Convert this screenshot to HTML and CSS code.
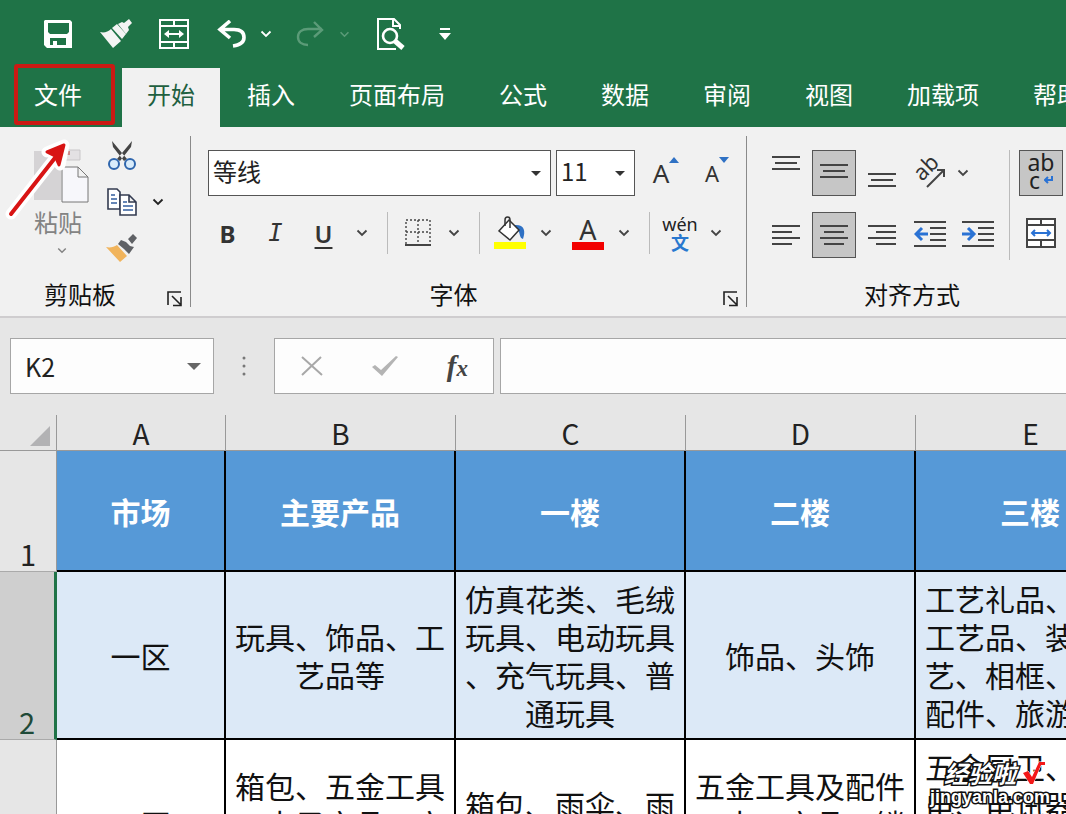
FILE: index.html
```html
<!DOCTYPE html>
<html lang="zh-CN">
<head>
<meta charset="utf-8">
<title>K2</title>
<link rel="stylesheet" href="styles.css">
</head>
<body>
<svg class="defs" aria-hidden="true">
  <symbol id="chev" viewBox="0 0 12 8"><path d="M1.5 1.5 6 6l4.500-4.500" fill="none" stroke="currentColor" stroke-width="1.800"/></symbol>
  <symbol id="tri" viewBox="0 0 12 6"><path d="M0 0h12L6 6z" fill="currentColor"/></symbol>
  <symbol id="launch" viewBox="0 0 16 16"><path d="M1 14V1h13M5 5l9 9M14 6v8.500H6" fill="none" stroke="#222" stroke-width="1.600"/></symbol>
</svg>
<div class="app">
  <header class="titlebar">
    <button class="q" aria-label="保存"><svg width="30" height="30" viewBox="0 0 30 30"><path fill="#fff" fill-rule="evenodd" d="M2 1h25l2 2v26H4l-3-3V2zM5 4v9l2 2h17l2-2V4zM7 19v7h3v-4h4v4h9v-7z"/></svg></button>
    <button class="q" aria-label="格式刷"><svg width="34" height="30" viewBox="0 0 34 30"><g fill="#f4f4f4"><path d="M1 13c4 1 8 0 11-3l10 12-8 7z"/><path d="m13 9 5-4 9 10-4 5z"/><path d="m19 5 4-2 2 1 5-4 3 4-4 4 1 3-3 4z"/></g></svg></button>
    <button class="q" aria-label="合并"><svg width="32" height="32" viewBox="0 0 32 32" fill="none" stroke="#fff" stroke-width="2"><path d="M2 2h28v28H2zM2 8h28M2 24h28M16 2v6M16 24v6M8 16h16"/><path fill="#fff" stroke="none" d="M6 16l5-4v8zM26 16l-5-4v8z"/></svg></button>
    <button class="q undo" aria-label="撤消"><svg width="30" height="28" viewBox="0 0 30 28" fill="none" stroke="#fff" stroke-width="3.600"><path d="M13 1 3 9.500 13 18M3 9.500h14c7 0 10 3 10 8S23 25 16 26"/></svg></button>
    <button class="q drop" aria-label="撤消选项"><svg width="12" height="8"><use href="#chev"/></svg></button>
    <button class="q redo" aria-label="恢复"><svg width="30" height="28" viewBox="0 0 30 28" fill="none" stroke="currentColor" stroke-width="2.400"><path d="m19 2 8 8-8 7M27 9H13c-6 0-10 3-10 8s4 8 10 8"/></svg></button>
    <button class="q drop faded" aria-label="恢复选项"><svg width="11" height="7"><use href="#chev"/></svg></button>
    <button class="q preview" aria-label="打印预览"><svg width="30" height="34" viewBox="0 0 30 34" fill="none" stroke="#fff"><path stroke-width="2" d="M20 32H2V2h16l6 6v4M17 2v7h7"/><circle cx="14" cy="19" r="7" stroke-width="2.600"/><path stroke-width="5" d="m19 24 8 7"/></svg></button>
    <button class="q more" aria-label="自定义"><svg width="12" height="14" viewBox="0 0 12 14"><path fill="#fff" d="M1 1h10v2H1zM0 6h12l-6 7z"/></svg></button>
  </header>
  <nav class="tabs">
    <button class="tab file">文件<span class="mark"></span></button>
    <button class="tab active">开始</button>
    <button class="tab">插入</button>
    <button class="tab">页面布局</button>
    <button class="tab">公式</button>
    <button class="tab">数据</button>
    <button class="tab">审阅</button>
    <button class="tab">视图</button>
    <button class="tab">加载项</button>
    <button class="tab">帮助</button>
  </nav>
  <section class="ribbon">
    <div class="group clip">
      <div class="clip-body">
        <button class="paste">
          <svg width="56" height="56" viewBox="0 0 56 56"><path fill="#d5d3d5" d="M0 3h46v9H27v40H0z"/><path fill="#e3e1e3" stroke="#c9c7c9" d="M17 2h29v10H17z"/><path fill="#c88" d="M28 3h8v4h-8z"/><path fill="#f7f7fb" stroke="#777" d="M28 19h16l10 10v25H28zM44 19v10h10"/></svg>
          <span>粘贴</span>
          <svg width="10" height="7"><use href="#chev"/></svg>
        </button>
        <div class="clip-tools">
          <button aria-label="剪切"><svg width="30" height="30" viewBox="0 0 30 30"><path fill="#444" d="m5 0 1 6 11 14 3-2zM25 0l-1 6-11 14-3-2z"/><g fill="#d9ecfb" stroke="#2f66ad" stroke-width="2"><circle cx="7" cy="23" r="5"/><circle cx="23" cy="23" r="5"/></g></svg></button>
          <div class="pair"><button aria-label="复制"><svg width="30" height="28" viewBox="0 0 30 28"><g fill="#fff" stroke="#333b50" stroke-width="1.600"><path d="M1 1h9l3 3v17H1z"/><path d="M13 7h9l7 7v13H13zM22 7v7h7"/></g><path stroke="#345f9f" stroke-width="1.500" d="M4 7h4M4 11h6M4 15h6M16 14h4M16 18h10M16 22h10"/></svg></button>
          <button aria-label="复制选项"><svg width="12" height="8"><use href="#chev"/></svg></button></div>
          <button aria-label="格式刷"><svg width="32" height="28" viewBox="0 0 32 28"><path fill="#f1b45c" d="M0 13c4 1 8 0 11-2l10 11-7 6z"/><path fill="#5f6165" d="m12 10 3-4 5 2 4 4 4 1-5 7-5-5zM22 5l5-5 4 4-5 6z"/></svg></button>
        </div>
      </div>
      <footer><span>剪贴板</span><button aria-label="剪贴板设置"><svg width="16" height="16"><use href="#launch"/></svg></button></footer>
      <svg class="arrow" width="76" height="84" viewBox="0 0 76 84"><g fill="none" stroke-linecap="round" stroke-linejoin="round"><path stroke="#fff" stroke-width="11" d="M11 78 58 18M64 9 47 16M64 9l-4 20"/><path stroke="#d81414" stroke-width="4" d="M11 78 58 18"/><path fill="#d81414" stroke="#d81414" stroke-width="3" d="m64 9-17 7 8 4 4 9z"/></g></svg>
    </div>
    <div class="group font">
      <div class="upper">
      <div class="row top">
        <label class="pick name"><select aria-label="字体"><option>等线</option></select><svg width="10" height="5"><use href="#tri"/></svg></label>
        <label class="pick size"><select aria-label="字号"><option>11</option></select><svg width="10" height="5"><use href="#tri"/></svg></label>
        <button class="grow" aria-label="增大字号">A<svg width="10" height="6" viewBox="0 0 10 6"><path fill="#2f71c4" d="M0 6h10L5 0z"/></svg></button>
        <button class="grow small" aria-label="减小字号">A<svg width="10" height="6" viewBox="0 0 10 6"><path fill="#2f71c4" d="M0 0h10L5 6z"/></svg></button>
      </div>
      <div class="row fmt">
        <button class="letter b">B</button><button class="letter i">I</button><button class="letter u">U</button>
        <button class="dd" aria-label="下划线选项"><svg width="12" height="8"><use href="#chev"/></svg></button>
        <i class="sep"></i>
        <button class="ico" aria-label="边框"><svg width="26" height="28" viewBox="0 0 26 28" fill="none" stroke="#444"><path stroke-dasharray="2 2" stroke-width="1.400" d="M1 25V1h24v24M1 13h24M13 1v24"/><path stroke-width="2" d="M0 26h26"/></svg></button>
        <button class="dd" aria-label="边框选项"><svg width="12" height="8"><use href="#chev"/></svg></button>
        <i class="sep"></i>
        <button class="ico" aria-label="填充颜色"><svg width="34" height="34" viewBox="0 0 34 34"><path fill="#2f71c4" d="M21 9c10-1 12 5 9 14-3-1-3-4-4-7z"/><path fill="#fff" stroke="#333" stroke-width="1.500" d="m16 4 10 10-9 10L6 15z"/><path fill="none" stroke="#333" stroke-width="1.500" d="M12 10V4c0-4 5-4 5 0v8"/><path fill="#ff0" d="M1 26h32v7H1z"/></svg></button>
        <button class="dd wide" aria-label="填充选项"><svg width="12" height="8"><use href="#chev"/></svg></button>
        <button class="ico ink" aria-label="字体颜色"><span>A</span></button>
        <button class="dd" aria-label="字体颜色选项"><svg width="12" height="8"><use href="#chev"/></svg></button>
        <i class="sep"></i>
        <button class="ico pinyin"><span>wén</span><b>文</b></button>
        <button class="dd" aria-label="拼音选项"><svg width="12" height="8"><use href="#chev"/></svg></button>
      </div>
      </div>
      <footer><span>字体</span><button aria-label="字体设置"><svg width="16" height="16"><use href="#launch"/></svg></button></footer>
    </div>
    <div class="group align">
      <div class="align-body">
        <div class="rows">
          <div class="row">
            <button class="sq" aria-label="顶端对齐"><svg width="28" height="34" viewBox="0 0 28 34"><path d="M0 1h28M3 7h22M0 13h28"/></svg></button>
            <button class="sq on" aria-label="垂直居中"><svg width="28" height="30" viewBox="0 0 28 30"><path d="M0 7h28M3 13h22M0 19h28"/></svg></button>
            <button class="sq" aria-label="底端对齐"><svg width="28" height="30" viewBox="0 0 28 30"><path d="M0 16h28M3 22h22M0 28h28"/></svg></button>
            <button class="sq angle" aria-label="方向"><svg width="34" height="34" viewBox="0 0 34 34"><text transform="translate(9 26) rotate(-45)">ab</text><path d="m14 31 17-17M24 14h7v7"/></svg></button>
            <button class="dd slim" aria-label="方向选项"><svg width="12" height="8"><use href="#chev"/></svg></button>
          </div>
          <div class="row">
            <button class="sq" aria-label="左对齐"><svg width="28" height="20" viewBox="0 0 28 20"><path d="M0 1h28M0 7h20M0 13h28M0 19h20"/></svg></button>
            <button class="sq on" aria-label="居中"><svg width="28" height="20" viewBox="0 0 28 20"><path d="M0 1h28M4 7h20M0 13h28M4 19h20"/></svg></button>
            <button class="sq" aria-label="右对齐"><svg width="28" height="20" viewBox="0 0 28 20"><path d="M0 1h28M8 7h20M0 13h28M8 19h20"/></svg></button>
            <button class="sq" aria-label="减少缩进"><svg width="32" height="28" viewBox="0 0 32 28"><path d="M0 1h32M16 7h16M16 13h16M16 19h16M0 25h32"/><path class="blue" d="M14 13H2M8 7l-6 6 6 6"/></svg></button>
            <button class="sq" aria-label="增加缩进"><svg width="32" height="28" viewBox="0 0 32 28"><path d="M0 1h32M16 7h16M16 13h16M16 19h16M0 25h32"/><path class="blue" d="M0 13h12M6 7l6 6-6 6"/></svg></button>
          </div>
        </div>
        <i class="sep tall"></i>
        <div class="rows">
          <button class="sq on wrap"><span>ab</span><span>c<svg width="9" height="8" viewBox="0 0 9 8"><path class="blue" d="M8 0v4H1M4 1 1 4l3 3"/></svg></span></button>
          <button class="sq" aria-label="合并后居中"><svg width="30" height="34" viewBox="0 0 30 34"><path class="pane" d="M1 1h28v28H1zM1 7h28M1 22h28M15 1v6M15 22v7"/><path class="blue" d="M6 15h18M9 12l-3 3 3 3M21 12l3 3-3 3"/></svg></button>
        </div>
      </div>
      <footer><span>对齐方式</span></footer>
    </div>
  </section>
  <section class="formula">
    <div class="box namebox"><input aria-label="名称框" value="K2"><button aria-label="名称列表"><svg width="14" height="7"><use href="#tri"/></svg></button></div>
    <svg class="dots" width="4" height="20" viewBox="0 0 4 20" fill="#777"><circle cx="2" cy="2" r="1.500"/><circle cx="2" cy="10" r="1.500"/><circle cx="2" cy="18" r="1.500"/></svg>
    <div class="box acts">
      <button aria-label="取消"><svg width="22" height="20" viewBox="0 0 22 20"><path fill="none" stroke="#a8a8a8" stroke-width="2" d="m1 1 20 18M20 1 1 19"/></svg></button>
      <button aria-label="输入"><svg width="26" height="20" viewBox="0 0 26 20"><path fill="#b4b4b4" d="m0 11 3-2 6 5L24 0l2 1L10 20z"/></svg></button>
      <button class="fx">f<sub>x</sub></button>
    </div>
    <input class="box entry" aria-label="编辑栏">
  </section>
  <main class="sheet">
    <table>
      <colgroup><col class="cn"><col class="ca"><col class="cb"><col class="cb"><col class="cb"><col class="cb"></colgroup>
      <thead><tr><th class="corner"><svg width="20" height="20" viewBox="0 0 20 20"><path fill="#b2b2b4" d="M20 0v20H0z"/></svg></th><th>A</th><th>B</th><th>C</th><th>D</th><th>E</th></tr></thead>
      <tbody>
        <tr class="r1"><th>1</th><td>市场</td><td>主要产品</td><td>一楼</td><td>二楼</td><td>三楼</td></tr>
        <tr class="r2"><th>2</th><td>一区</td><td>玩具、饰品、工<br>艺品等</td><td>仿真花类、毛绒<br>玩具、电动玩具<br>、充气玩具、普<br>通玩具</td><td>饰品、头饰</td><td>工艺礼品、旅游<br>工艺品、装饰工<br>艺、相框、相框<br>配件、旅游用品</td></tr>
        <tr class="r3"><th>3</th><td>二区</td><td>箱包、五金工具<br>、电子产品、家<br>电等</td><td>箱包、雨伞、雨<br>披</td><td>五金工具及配件<br>、电工产品、锁<br>具、车类</td><td>五金厨卫、小家<br>电、电讯器材、<br>电子仪器、钟表<br>等</td></tr>
      </tbody>
    </table>
  </main>
  <div class="stamp"><p class="cn-name">经验啦<svg width="24" height="24" viewBox="0 0 24 24"><path fill="#f31818" stroke="#fff" d="m1 12 5-2 4 6 7-15h6v3h-4L11 23H8z"/></svg></p><p>jingyanla.com</p></div>
</div>
</body>
</html>
```

FILE: styles.css
```css
* { box-sizing: border-box; }
body { margin: 0; font-family: "Noto Sans CJK SC", sans-serif; color: #222; }
button { border: 0; padding: 0; margin: 0; background: none; font: inherit; color: inherit; display: flex; align-items: center; justify-content: center; flex: none; }
input, select { font: inherit; color: inherit; border: 0; outline: 0; background: none; }
svg { display: block; flex: none; }
.defs { position: absolute; width: 0; height: 0; }
.app { position: relative; height: 100vh; overflow: hidden; display: flex; flex-direction: column; background: #e6e6e6; }

.titlebar { flex: none; height: 68px; background: #1f7347; display: flex; align-items: center; padding-left: 43px; color: #fff; }
.q { width: 30px; height: 34px; margin-right: 28px; }
.q.undo { margin: 0 13px 0 0; }
.q.drop { width: 12px; margin-right: 23px; }
.q.redo { margin-right: 13px; color: #5b9b78; }
.q.faded { color: #5b9b78; margin-right: 26px; }
.q.preview { margin-right: 33px; }
.q.more { width: 12px; margin: 0; }

.tabs { flex: none; display: flex; height: 59px; background: #1f7347; padding-left: 7px; color: #fff; }
.tab { padding: 0 27px 8px; font-size: 24px; white-space: nowrap; }
.tab.active { background: #f1f1f1; color: #1f6040; padding: 0 25px 8px; margin-left: 13px; }
.file { position: relative; }
.mark { position: absolute; left: 7px; top: -4px; right: -6px; bottom: 2px; border: 4px solid #cb1a14; border-radius: 3px; }

.ribbon { flex: none; display: flex; height: 191px; background: #f1f1f1; border-bottom: 2px solid #cfcdcf; padding-top: 9px; }
.group { position: relative; flex: none; height: 171px; display: flex; flex-direction: column; justify-content: space-between; border-right: 1px solid #8a8a8a; }
.group footer { display: flex; align-items: center; height: 26px; font-size: 24px; color: #111; }
.group footer span { flex: 1; text-align: center; line-height: 24px; }
.group footer button { width: 30px; height: 16px; align-self: flex-end; }
.clip { width: 191px; }
.clip footer { padding-right: 0; }
.clip-body { display: flex; padding-left: 34px; }
.paste { flex-direction: column; padding-top: 12px; justify-content: flex-start; color: #838383; font-size: 24px; width: 56px; }
.paste span { line-height: 30px; margin: 3px 8px 10px 0; }
.clip-tools { display: flex; flex-direction: column; gap: 6px; padding-left: 16px; }
.clip-tools button { height: 40px; width: 32px; }
.pair { display: flex; gap: 14px; }
.clip-tools .pair button + button { width: 12px; }
.arrow { position: absolute; left: 0; top: 0; }

.row { display: flex; align-items: center; }
.font { width: 556px; }
.font .top { padding: 14px 0 0 17px; gap: 5px; }
.pick { display: flex; align-items: center; height: 46px; border: 1px solid #555; background: #fff; padding-right: 9px; color: #333; }
.pick select { flex: 1; min-width: 0; appearance: none; font-size: 24px; line-height: 40px; height: 44px; padding: 0 4px 4px; color: #222; }
.name { width: 343px; }
.size { width: 79px; }
.grow { font: 26px/32px "Noto Sans", sans-serif; align-items: flex-end; width: 46px; height: 32px; padding-left: 6px; color: #333; }
.grow svg { align-self: flex-start; }
.grow.small { font-size: 22px; }
.font .fmt { padding: 16px 0 0 14px; gap: 3px; }
.letter { width: 45px; height: 42px; font: 24px "Noto Sans", sans-serif; color: #333; }
.letter.b { font-weight: bold; }
.letter.i { font-family: "DejaVu Sans Mono", monospace; font-style: italic; }
.letter.u { text-decoration: underline; text-underline-offset: 4px; text-decoration-thickness: 2px; font-weight: 600; }
.dd { width: 26px; height: 42px; color: #444; }
.dd.wide { margin-right: 6px; }
.sep { flex: none; width: 1px; height: 42px; background: #bbb; margin: 0 7px 0 9px; }
.ico { width: 40px; height: 42px; }
.ink span { font: 27px/27px "Noto Sans", sans-serif; border-bottom: 8px solid #f20000; width: 32px; height: 34px; color: #333; }
.pinyin { flex-direction: column; }
.pinyin span { font: 18px/18px "Noto Sans", sans-serif; }
.pinyin b { font-size: 18px; line-height: 18px; color: #2878cf; }

.align { width: 330px; border: 0; }
.align-body { display: flex; padding: 14px 0 0 17px; }
.rows { display: flex; flex-direction: column; gap: 16px; flex: none; }
.align .row { gap: 4px; }
.sq { width: 44px; height: 46px; }
.sq.on { background: #c6c6c6; border: 1px solid #555; }
.sq path { fill: none; stroke: #444; stroke-width: 2; }
.sq .pane { fill: #fff; }
.sq .blue { stroke: #2a72d4; stroke-width: 2; }
.row .sq .blue { stroke-width: 3; }
.angle text { font: 22px "Noto Sans", sans-serif; fill: #333; }
.angle svg { overflow: visible; }
.dd.slim { width: 14px; }
.sep.tall { height: 110px; margin: 0 9px 0 9px; }
.wrap { flex-direction: column; font: 23px/18px "Noto Sans", sans-serif; padding-bottom: 4px; }
.wrap span { display: flex; align-items: center; gap: 4px; height: 18px; }

.formula { flex: none; display: flex; height: 97px; padding: 20px 0 0 10px; align-items: flex-start; }
.box { height: 56px; border: 1px solid #a6a6a6; background: #fdfdfd; display: flex; align-items: center; }
.namebox { width: 204px; padding: 0 12px 0 14px; font-size: 25px; }
.namebox input { flex: 1; min-width: 0; padding: 0; }
.namebox button { color: #666; }
.dots { margin: 18px 28px 0 28px; }
.acts { width: 220px; justify-content: space-between; padding: 0 25px 0 26px; margin-right: 6px; }
.fx { font: italic bold 29px/30px "Liberation Serif", serif; color: #444; }
.fx sub { font-size: 23px; line-height: 20px; padding-top: 6px; }
.entry { flex: 1; min-width: 0; border-right: 0; }

.sheet { flex: 1; min-height: 0; overflow: hidden; }
table { table-layout: fixed; width: 1146px; border-collapse: separate; border-spacing: 0; }
.cn { width: 57px; }
.ca { width: 169px; }
.cb { width: 230px; }
th { font-weight: 400; padding: 0; }
thead th { height: 36px; font-size: 28px; line-height: 34px; border-right: 1px solid #999; border-bottom: 1px solid #999; }
.corner svg { margin: 6px 6px 0 auto; }
tbody th { vertical-align: bottom; font-size: 29px; line-height: 36px; border-right: 1px solid #999; border-bottom: 1px solid #aaa; }
td { padding: 0; text-align: center; vertical-align: middle; white-space: nowrap; font-size: 30px; line-height: 38px; color: #111; border-right: 2px solid #000; border-bottom: 2px solid #000; }
.r1 > * { height: 121px; }
.r1 td { background: #5699d7; color: #fff; font-weight: 700; }
.r2 > *, .r3 > * { height: 168px; }
.r2 td { background: #dce9f7; }
.r2 th { background: #cfcfcf; border-right: 3px solid #1f7347; color: #1f4a38; }
.r3 td { background: #fff; }

.stamp { position: absolute; right: 16px; bottom: 6px; color: #fff; font: bold 18px/22px "Liberation Sans", sans-serif; -webkit-text-stroke: 3px #111; paint-order: stroke fill; }
.stamp p { margin: 0; }
.stamp .cn-name { display: flex; align-items: center; gap: 6px; padding-left: 14px; font: italic bold 24px/26px "Noto Sans CJK SC", sans-serif; }
```
